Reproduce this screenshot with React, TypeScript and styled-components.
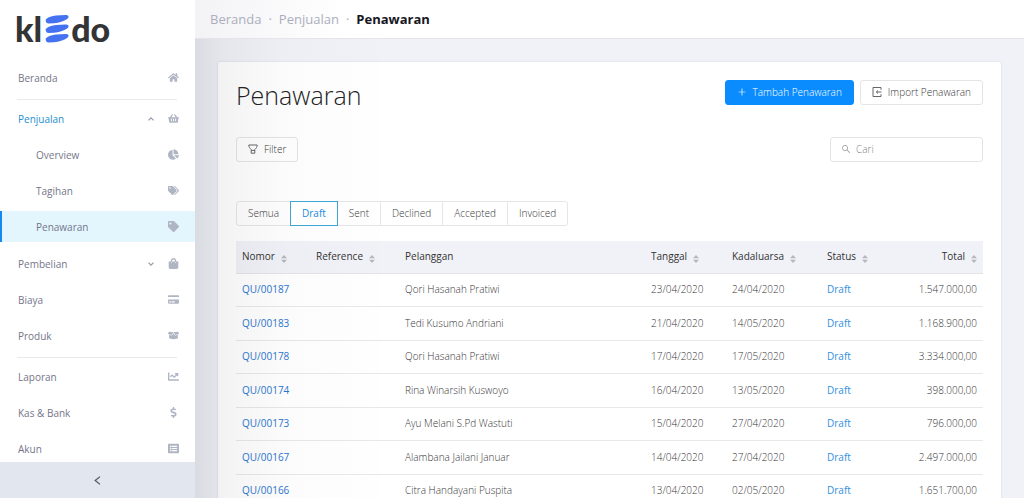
import React from "react";
import styled, { createGlobalStyle, css } from "styled-components";
import type { IconType } from "react-icons";
import {
  FaBoxOpen,
  FaChartLine,
  FaChartPie,
  FaCreditCard,
  FaDollarSign,
  FaHome,
  FaListAlt,
  FaShoppingBag,
  FaShoppingBasket,
  FaTag,
  FaTags,
} from "react-icons/fa";
import { AiOutlineLeft, AiOutlinePlus, AiOutlineSearch } from "react-icons/ai";

const GlobalStyle = createGlobalStyle`
  *, *::before, *::after { box-sizing: border-box; }
  body {
    margin: 0;
    background: #f0f2f7;
    color: #383838;
    font: 300 10px/16px "Open Sans", "Noto Sans", sans-serif;
  }
  button, input { font: inherit; color: inherit; }
  button { cursor: pointer; }
  a { color: inherit; text-decoration: none; }
`;

const Shell = styled.div`
  display: flex;
  height: 100vh;
  overflow: hidden;
`;

/* Sidebar */

const Sidebar = styled.aside`
  display: flex;
  flex-direction: column;
  flex: 0 0 195px;
  background: #fff;
`;

const Logo = styled.a`
  display: flex;
  align-items: center;
  flex: none;
  height: 62px;
  padding: 0 0 4px 15px;
  color: #333436;
  font: 900 34px/56px Lato, sans-serif;

  svg {
    width: 25px;
    height: 30px;
    margin: 0 1px 0 3px;
  }
`;

const Nav = styled.nav`
  flex: 1;
  min-height: 0;
  overflow: hidden;
`;

const Group = styled.ul`
  display: flex;
  flex-direction: column;
  gap: 5px;
  margin: 0;
  padding: 0;
  list-style: none;

  & + & {
    position: relative;
    padding-top: 10px;
  }

  & + &::before {
    content: "";
    position: absolute;
    top: 6px;
    left: 17px;
    right: 18px;
    border-top: 1px solid #e8eaee;
  }
`;

const SubMenu = styled.ul`
  display: flex;
  flex-direction: column;
  gap: 5px;
  margin: 5px 0 0;
  padding: 0 0 1px;
  list-style: none;
`;

const NavLink = styled.a<{ $nested?: boolean; $open?: boolean; $active?: boolean }>`
  display: flex;
  align-items: center;
  height: 31px;
  padding: 0 16px 0 ${(p) => (p.$nested ? 36 : 18)}px;
  color: ${(p) => (p.$open ? "#1e8fd0" : "#74758a")};
  font-weight: 400;
  ${(p) =>
    p.$active &&
    css`
      background: #e3f6fe;
      box-shadow: inset 2px 0 #1688f0;
    `}
`;

const NavText = styled.span`
  flex: 1;
`;

const Chevron = styled.svg`
  width: 6px;
  height: 4px;
  margin-right: 11px;
  fill: none;
  stroke: #9a9eac;
  stroke-width: 1.3;
`;

const NavIcon = styled.span`
  display: flex;
  justify-content: flex-end;
  width: 14px;
  color: #b0b5c4;

  svg {
    width: auto;
    height: 11px;
  }
`;

const Collapse = styled.button`
  display: flex;
  align-items: center;
  justify-content: center;
  flex: none;
  height: 36px;
  border: 0;
  background: #e2e7ef;
  color: #4f5563;

  svg {
    font-size: 11px;
    stroke: currentColor;
    stroke-width: 40;
  }
`;

/* Main column */

const Main = styled.main`
  position: relative;
  display: flex;
  flex-direction: column;
  flex: 1;
  min-width: 0;

  &::after {
    content: "";
    position: absolute;
    inset: 39px auto 0 0;
    width: 200px;
    background: linear-gradient(
      90deg,
      rgba(20, 20, 40, 0.1),
      rgba(20, 20, 40, 0.05) 14%,
      rgba(20, 20, 40, 0.015) 45%,
      rgba(20, 20, 40, 0)
    );
    pointer-events: none;
  }
`;

const TopBar = styled.header`
  flex: none;
  height: 39px;
  padding: 0 15px;
  border-bottom: 1px solid #e3e5ea;
  background: linear-gradient(90deg, #f3f3f6, #fff 150px);
`;

const Crumbs = styled.ol`
  display: flex;
  align-items: center;
  height: 38px;
  margin: 0;
  padding: 0;
  list-style: none;
  color: #acaebc;
  font-size: 13px;
  font-weight: 400;

  li + li::before {
    content: "·";
    margin: 0 7px;
  }

  [aria-current] {
    color: #17171f;
    font-weight: 700;
  }
`;

const Content = styled.div`
  flex: 1;
  min-height: 0;
  padding: 23px;
  overflow-y: auto;
  scrollbar-width: none;
`;

const Card = styled.section`
  padding: 18px;
  border-radius: 2px;
  background: #fff;
  box-shadow: 0 0 2px rgba(60, 70, 100, 0.2);
`;

const Bar = styled.div`
  display: flex;
  align-items: center;
  justify-content: space-between;
`;

const TitleBar = styled(Bar)`
  align-items: flex-start;
  margin-bottom: 27px;
`;

const Title = styled.h1`
  margin: 0;
  color: #222;
  font-size: 25px;
  font-weight: 300;
  line-height: 30px;
`;

const Actions = styled.div`
  display: flex;
  gap: 6px;
`;

const Button = styled.button<{ $primary?: boolean }>`
  display: inline-flex;
  align-items: center;
  gap: 6px;
  height: 25px;
  padding: 0 11px 2px;
  border: 1px solid ${(p) => (p.$primary ? "#0a8cff" : "#e4e4e8")};
  border-radius: 3px;
  background: ${(p) => (p.$primary ? "#0a8cff" : "#fff")};
  color: ${(p) => (p.$primary ? "#fff" : "inherit")};
  line-height: 16px;
  white-space: nowrap;

  svg {
    width: 10px;
    height: 10px;
  }
`;

const LineIcon = styled.svg`
  fill: none;
  stroke: #666;
  stroke-width: 1;
`;

const Search = styled.label`
  display: flex;
  align-items: center;
  gap: 5px;
  width: 153px;
  height: 25px;
  padding: 0 10px 2px;
  border: 1px solid #e4e4e8;
  border-radius: 3px;
  color: #999;

  input {
    flex: 1;
    min-width: 0;
    padding: 0;
    border: 0;
    outline: 0;
    background: none;
  }

  input::placeholder {
    color: #808080;
    opacity: 1;
  }
`;

const Tabs = styled.div`
  display: flex;
  margin: 39px 0 15px;
`;

const Tab = styled.button<{ $active?: boolean }>`
  height: 25px;
  margin-right: -1px;
  padding: 0 11px 2px;
  border: 1px solid ${(p) => (p.$active ? "#3fa5d2" : "#e6e6ea")};
  background: #fff;
  color: ${(p) => (p.$active ? "#2089de" : "inherit")};
  font-weight: ${(p) => (p.$active ? 400 : 300)};
  z-index: ${(p) => (p.$active ? 1 : 0)};

  &:first-child {
    border-radius: 3px 0 0 3px;
  }

  &:last-child {
    border-radius: 0 3px 3px 0;
  }
`;

const Table = styled.table`
  width: 100%;
  table-layout: fixed;
  border-collapse: separate;
  border-spacing: 0;
`;

const Col = styled.col<{ $width?: number }>`
  width: ${(p) => (p.$width ? `${p.$width}px` : "auto")};
`;

const Th = styled.th<{ $end?: boolean }>`
  height: 33px;
  padding: 0 6px 2px;
  border-bottom: 1px solid #e3e4e8;
  background: #f1f2f7;
  color: #333;
  font-weight: 400;
  text-align: ${(p) => (p.$end ? "right" : "left")};
  white-space: nowrap;
`;

const Sorter = styled.svg`
  width: 6px;
  height: 8px;
  margin-left: 6px;
  vertical-align: -3px;
  fill: #b6b7bd;
`;

const Tr = styled.tr`
  height: 33px;

  &:nth-child(even) {
    height: 34px;
  }
`;

const Td = styled.td<{ $end?: boolean }>`
  padding: 0 6px 2px;
  border-bottom: 1px solid #e8e8ec;
  text-align: ${(p) => (p.$end ? "right" : "left")};
  white-space: nowrap;
`;

const TableLink = styled.a<{ $soft?: boolean }>`
  color: ${(p) => (p.$soft ? "#338fe0" : "#2a76cf")};
  font-weight: 400;
`;

interface Item {
  label: string;
  icon: IconType;
  open?: boolean;
  active?: boolean;
  children?: Item[];
}

const menu: Item[][] = [
  [{ label: "Beranda", icon: FaHome }],
  [
    {
      label: "Penjualan",
      icon: FaShoppingBasket,
      open: true,
      children: [
        { label: "Overview", icon: FaChartPie },
        { label: "Tagihan", icon: FaTags },
        { label: "Penawaran", icon: FaTag, active: true },
      ],
    },
    { label: "Pembelian", icon: FaShoppingBag, open: false, children: [] },
    { label: "Biaya", icon: FaCreditCard },
    { label: "Produk", icon: FaBoxOpen },
  ],
  [
    { label: "Laporan", icon: FaChartLine },
    { label: "Kas & Bank", icon: FaDollarSign },
    { label: "Akun", icon: FaListAlt },
  ],
];

const tabs = ["Semua", "Draft", "Sent", "Declined", "Accepted", "Invoiced"];

const columns: { label: string; width?: number; sortable?: boolean; end?: boolean }[] = [
  { label: "Nomor", width: 74, sortable: true },
  { label: "Reference", width: 89, sortable: true },
  { label: "Pelanggan" },
  { label: "Tanggal", width: 81, sortable: true },
  { label: "Kadaluarsa", width: 95, sortable: true },
  { label: "Status", width: 75, sortable: true },
  { label: "Total", width: 87, sortable: true, end: true },
];

const quotes = [
  ["QU/00187", "Qori Hasanah Pratiwi", "23/04/2020", "24/04/2020", "1.547.000,00"],
  ["QU/00183", "Tedi Kusumo Andriani", "21/04/2020", "14/05/2020", "1.168.900,00"],
  ["QU/00178", "Qori Hasanah Pratiwi", "17/04/2020", "17/05/2020", "3.334.000,00"],
  ["QU/00174", "Rina Winarsih Kuswoyo", "16/04/2020", "13/05/2020", "398.000,00"],
  ["QU/00173", "Ayu Melani S.Pd Wastuti", "15/04/2020", "27/04/2020", "796.000,00"],
  ["QU/00167", "Alambana Jailani Januar", "14/04/2020", "27/04/2020", "2.497.000,00"],
  ["QU/00166", "Citra Handayani Puspita", "13/04/2020", "02/05/2020", "1.651.700,00"],
];

const STRIPE =
  "M1 5.200C3 3 7 2 11 1.500L20.500 1C24 1 24.400 3.300 22.200 4.900 19 7 14 8.500 9 9.200L3.500 9.400C2 9.300 1.400 8.800 1 7.800 .6 6.800 .5 6 1 5.200Z";

function MenuItem({ item, nested }: { item: Item; nested?: boolean }) {
  const Icon = item.icon;
  return (
    <li>
      <NavLink
        href="#"
        $nested={nested}
        $open={item.open}
        $active={item.active}
        aria-expanded={item.children ? !!item.open : undefined}
      >
        <NavText>{item.label}</NavText>
        {item.children && (
          <Chevron viewBox="0 0 6 4" aria-hidden="true">
            <path d={item.open ? "M.5 3.400 3 .9 5.500 3.400" : "M.5 .6 3 3.100 5.500 .6"} />
          </Chevron>
        )}
        <NavIcon>
          <Icon />
        </NavIcon>
      </NavLink>
      {item.open && (
        <SubMenu>
          {item.children!.map((child) => (
            <MenuItem key={child.label} item={child} nested />
          ))}
        </SubMenu>
      )}
    </li>
  );
}

export default function App() {
  return (
    <>
      <GlobalStyle />
      <Shell>
        <Sidebar>
          <Logo href="#" aria-label="kledo">
            <span>kl</span>
            <svg viewBox="0 0 25 30" fill="#4572f0" aria-hidden="true">
              <path d={STRIPE} />
              <path d={STRIPE} transform="translate(0 9.500)" />
              <path d={STRIPE} transform="translate(0 19)" />
            </svg>
            <span>do</span>
          </Logo>
          <Nav>
            {menu.map((group, i) => (
              <Group key={i}>
                {group.map((item) => (
                  <MenuItem key={item.label} item={item} />
                ))}
              </Group>
            ))}
          </Nav>
          <Collapse type="button" aria-label="Tutup menu">
            <AiOutlineLeft />
          </Collapse>
        </Sidebar>

        <Main>
          <TopBar>
            <Crumbs>
              <li>
                <a href="#">Beranda</a>
              </li>
              <li>
                <a href="#">Penjualan</a>
              </li>
              <li>
                <span aria-current="page">Penawaran</span>
              </li>
            </Crumbs>
          </TopBar>
          <Content>
            <Card>
              <TitleBar>
                <Title>Penawaran</Title>
                <Actions>
                  <Button type="button" $primary>
                    <AiOutlinePlus />
                    Tambah Penawaran
                  </Button>
                  <Button type="button">
                    <LineIcon viewBox="0 0 10 10" aria-hidden="true">
                      <path d="M9 2.800V.5H1V9.500H9V7.200M9.500 5H4.500M6 3.500 4.300 5 6 6.500" />
                    </LineIcon>
                    Import Penawaran
                  </Button>
                </Actions>
              </TitleBar>
              <Bar>
                <Button type="button">
                  <LineIcon viewBox="0 0 10 10" aria-hidden="true">
                    <path d="M.8 1H9.200C9.200 3.200 8 4.300 6.800 5.500V9.200H3.200V5.500C2 4.300 .8 3.200 .8 1ZM3.200 6.400H6.800" />
                  </LineIcon>
                  Filter
                </Button>
                <Search>
                  <AiOutlineSearch />
                  <input type="text" placeholder="Cari" aria-label="Cari" />
                </Search>
              </Bar>
              <Tabs>
                {tabs.map((tab) => (
                  <Tab key={tab} type="button" $active={tab === "Draft"}>
                    {tab}
                  </Tab>
                ))}
              </Tabs>
              <Table>
                <colgroup>
                  {columns.map((c) => (
                    <Col key={c.label} $width={c.width} />
                  ))}
                </colgroup>
                <thead>
                  <tr>
                    {columns.map((c) => (
                      <Th key={c.label} scope="col" $end={c.end}>
                        {c.label}
                        {c.sortable && (
                          <Sorter viewBox="0 0 6 8" aria-hidden="true">
                            <path d="M3 0 6 3.300H0ZM3 8 0 4.700H6Z" />
                          </Sorter>
                        )}
                      </Th>
                    ))}
                  </tr>
                </thead>
                <tbody>
                  {quotes.map(([number, customer, date, due, total]) => (
                    <Tr key={number}>
                      <Td>
                        <TableLink href="#">{number}</TableLink>
                      </Td>
                      <Td />
                      <Td>{customer}</Td>
                      <Td>{date}</Td>
                      <Td>{due}</Td>
                      <Td>
                        <TableLink href="#" $soft>
                          Draft
                        </TableLink>
                      </Td>
                      <Td $end>{total}</Td>
                    </Tr>
                  ))}
                </tbody>
              </Table>
            </Card>
          </Content>
        </Main>
      </Shell>
    </>
  );
}
